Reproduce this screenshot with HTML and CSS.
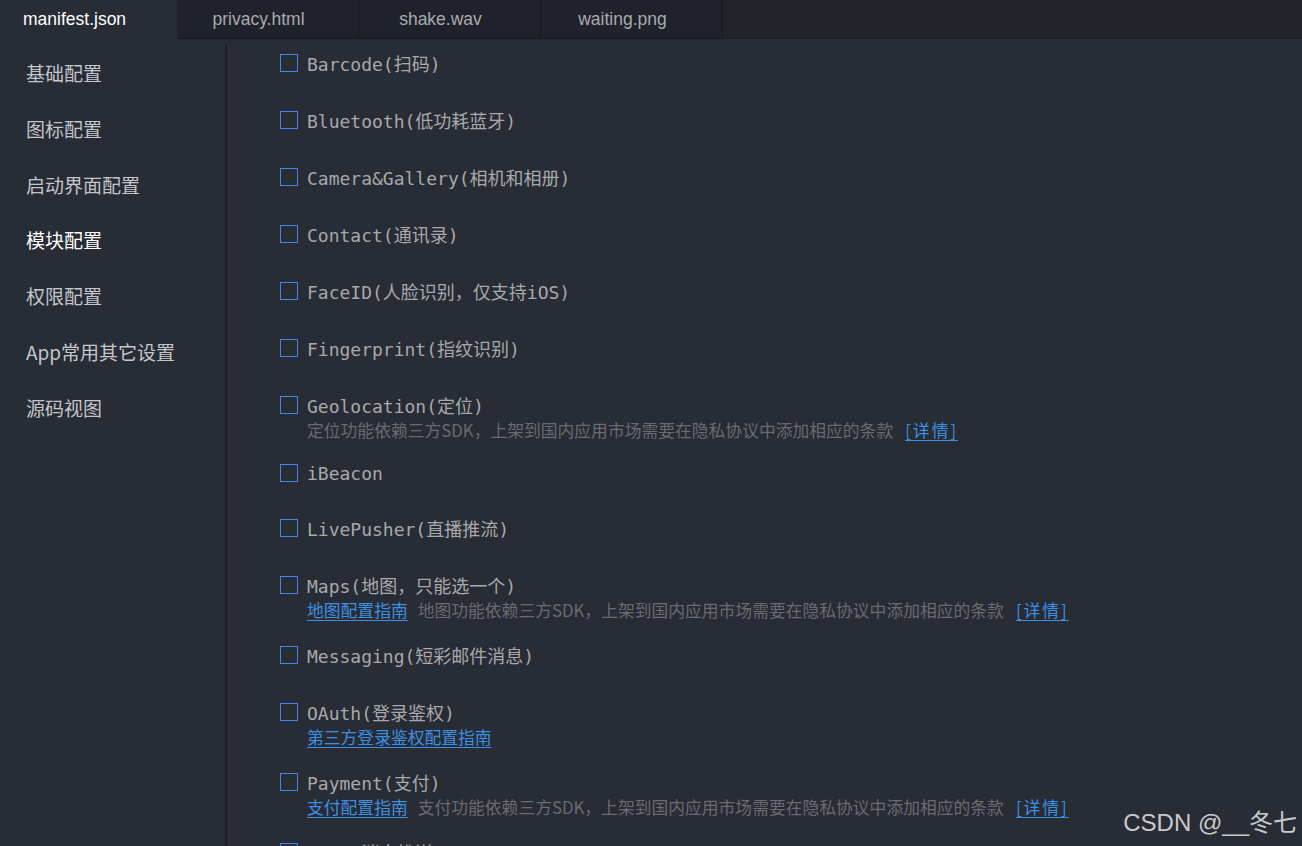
FILE: index.html
```html
<!DOCTYPE html>
<html lang="zh">
<head>
<meta charset="utf-8">
<title>manifest.json</title>
<link rel="stylesheet" href="styles.css">
</head>
<body>
<div class="app">
  <div class="tabs">
    <div class="tab active">manifest.json</div>
    <div class="tab">privacy.html</div>
    <div class="tab">shake.wav</div>
    <div class="tab">waiting.png</div>
    <div class="tab-fill"></div>
  </div>
  <div class="main">
    <nav class="sidebar">
      <div class="nav-item">基础配置</div>
      <div class="nav-item">图标配置</div>
      <div class="nav-item">启动界面配置</div>
      <div class="nav-item active">模块配置</div>
      <div class="nav-item">权限配置</div>
      <div class="nav-item">App常用其它设置</div>
      <div class="nav-item">源码视图</div>
    </nav>
    <div class="divider"></div>
    <section class="content">
      <div class="item"><div class="label"><span class="box"></span><span>Barcode(扫码)</span></div></div>
      <div class="item"><div class="label"><span class="box"></span><span>Bluetooth(低功耗蓝牙)</span></div></div>
      <div class="item"><div class="label"><span class="box"></span><span>Camera&amp;Gallery(相机和相册)</span></div></div>
      <div class="item"><div class="label"><span class="box"></span><span>Contact(通讯录)</span></div></div>
      <div class="item"><div class="label"><span class="box"></span><span>FaceID(人脸识别，仅支持iOS)</span></div></div>
      <div class="item"><div class="label"><span class="box"></span><span>Fingerprint(指纹识别)</span></div></div>
      <div class="item has-desc short">
        <div class="label"><span class="box"></span><span>Geolocation(定位)</span></div>
        <div class="desc">定位功能依赖三方SDK，上架到国内应用市场需要在隐私协议中添加相应的条款<a class="link more">[详情]</a></div>
      </div>
      <div class="item tight"><div class="label"><span class="box"></span><span>iBeacon</span></div></div>
      <div class="item"><div class="label"><span class="box"></span><span>LivePusher(直播推流)</span></div></div>
      <div class="item has-desc">
        <div class="label"><span class="box"></span><span>Maps(地图，只能选一个)</span></div>
        <div class="desc"><a class="link guide">地图配置指南</a>地图功能依赖三方SDK，上架到国内应用市场需要在隐私协议中添加相应的条款<a class="link more">[详情]</a></div>
      </div>
      <div class="item"><div class="label"><span class="box"></span><span>Messaging(短彩邮件消息)</span></div></div>
      <div class="item has-desc">
        <div class="label"><span class="box"></span><span>OAuth(登录鉴权)</span></div>
        <div class="desc"><a class="link">第三方登录鉴权配置指南</a></div>
      </div>
      <div class="item has-desc">
        <div class="label"><span class="box"></span><span>Payment(支付)</span></div>
        <div class="desc"><a class="link guide">支付配置指南</a>支付功能依赖三方SDK，上架到国内应用市场需要在隐私协议中添加相应的条款<a class="link more">[详情]</a></div>
      </div>
      <div class="item"><div class="label"><span class="box"></span><span>Push(消息推送)</span></div></div>
    </section>
  </div>
  <div class="watermark">CSDN @__冬七</div>
</div>
</body>
</html>
```

FILE: styles.css
```css
html, body {
  margin: 0;
  padding: 0;
  height: 100%;
  overflow: hidden;
  background: #282c35;
}

.app {
  position: relative;
  height: 846px;
  overflow: hidden;
  display: flex;
  flex-direction: column;
  font-family: "Liberation Sans", "Noto Sans CJK SC", sans-serif;
}

.tabs {
  display: flex;
  height: 39px;
  background: #21242b;
  flex-shrink: 0;
}

.tab {
  width: 182px;
  box-sizing: border-box;
  display: flex;
  align-items: center;
  justify-content: center;
  padding-right: 18px;
  font-size: 17.5px;
  color: #a9abaf;
  background: #1f222a;
  border-right: 1px solid #17191e;
  border-bottom: 1px solid #17191e;
}

.tab.active {
  width: 177px;
  justify-content: flex-start;
  padding-left: 23px;
  padding-right: 0;
  color: #ffffff;
  background: #282c35;
  border-bottom: none;
  border-right: none;
}

.tab-fill {
  flex: 1;
  background: #21242b;
  border-bottom: 1px solid #1d2026;
}

.main {
  flex: 1;
  display: flex;
  min-height: 0;
}

.sidebar {
  width: 225px;
  flex-shrink: 0;
  padding-top: 19px;
  box-sizing: border-box;
}

.nav-item {
  height: 55.8px;
  line-height: 29px;
  padding-left: 26px;
  font-family: "Noto Sans CJK SC", sans-serif;
  font-size: 19px;
  color: #c3c6cc;
}

.nav-item.active {
  color: #ffffff;
}

.divider {
  width: 2px;
  margin-top: 6px;
  background: #1b1d23;
  flex-shrink: 0;
}

.content {
  flex: 1;
  padding-top: 11px;
  padding-left: 53px;
}

.item {
  min-height: 57px;
  box-sizing: border-box;
}

.item.tight {
  min-height: 55px;
}

.item.has-desc {
  padding-bottom: 19px;
}

.item.has-desc.short {
  padding-bottom: 17px;
}

.label {
  display: flex;
  align-items: center;
  height: 26px;
  font-family: "DejaVu Sans Mono", "Noto Sans CJK SC", monospace;
  font-size: 18px;
  color: #a7a9ac;
}

.box {
  width: 18px;
  height: 18px;
  box-sizing: border-box;
  border: 1.5px solid #4583e6;
  margin-right: 9px;
  flex-shrink: 0;
}

.desc {
  height: 25px;
  line-height: 25px;
  padding-left: 27px;
  font-family: "Noto Sans CJK SC", sans-serif;
  font-size: 16.8px;
  color: #686b71;
  white-space: nowrap;
}

.link {
  color: #3c8fe3;
  text-decoration: underline;
  text-underline-offset: 3px;
}

.link.guide {
  margin-right: 10px;
}

.link.more {
  margin-left: 12px;
  letter-spacing: 2px;
}

.watermark {
  position: absolute;
  right: 5px;
  bottom: 8px;
  font-family: "Liberation Sans", "Noto Sans CJK SC", sans-serif;
  font-size: 24px;
  color: #c9cacc;
}
```
